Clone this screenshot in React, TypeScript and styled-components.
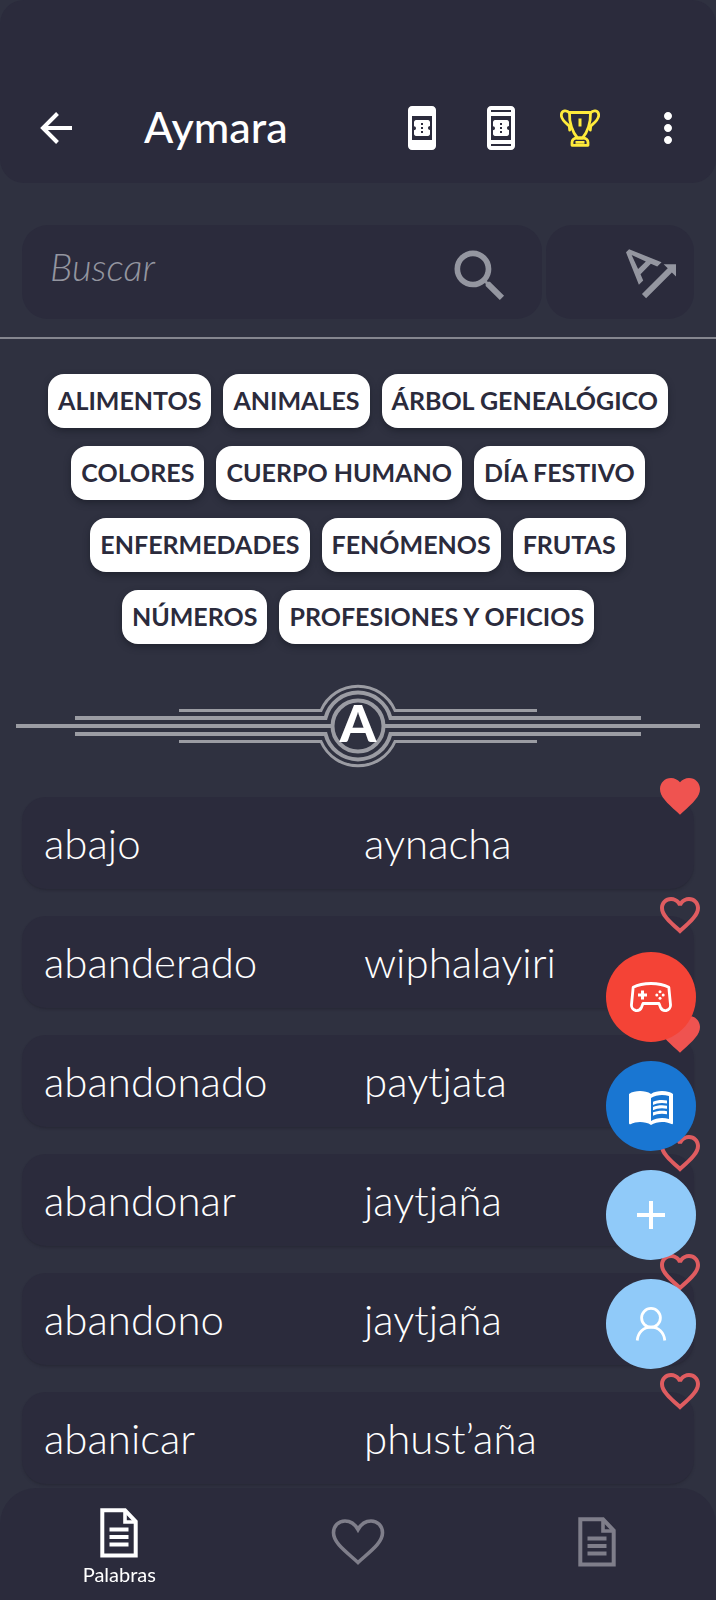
import React from "react";
import styled, { createGlobalStyle } from "styled-components";
import {
  MdBookOnline,
  MdFavorite,
  MdFavoriteBorder,
  MdMenuBook,
  MdMoreVert,
  MdOutlineBookOnline,
  MdSearch,
  MdTextRotationAngleup,
} from "react-icons/md";

const color = {
  page: "#2f3140",
  panel: "#2b2b3c",
  muted: "#9496a0",
  rule: "#85868f",
  ornament: "#9b9ca3",
  heart: "#ef5350",
  heartLine: "#df5c60",
  inactive: "#7f7e8a",
  red: "#f44336",
  blue: "#1976d2",
  sky: "#90caf9",
  text: "#ffffff",
};

const GlobalStyle = createGlobalStyle`
  *, *::before, *::after { box-sizing: border-box; }
  body {
    margin: 0;
    background: ${color.page};
    color: ${color.text};
    font-family: Lato, "Open Sans", sans-serif;
  }
  button {
    margin: 0;
    padding: 0;
    border: 0;
    background: none;
    color: inherit;
    font: inherit;
    cursor: pointer;
  }
  svg { display: block; }
`;

const Page = styled.div`
  min-height: 100vh;
  padding-bottom: 112px;
`;

const Header = styled.header`
  display: flex;
  align-items: center;
  gap: 40px;
  height: 183px;
  padding: 72px 24px 0 32px;
  background: ${color.panel};
  border-radius: 24px;
`;

const Actions = styled.div`
  display: flex;
  gap: 31px;
`;

const IconButton = styled.button`
  display: flex;
  align-items: center;
  justify-content: center;
  flex: none;
  width: 48px;
  height: 48px;
`;

const Title = styled.h1`
  flex: 1;
  margin: 0;
  padding: 0 0 2px 24px;
  font-size: 43px;
  line-height: 56px;
  font-weight: 500;
`;

const SearchBar = styled.form`
  display: flex;
  gap: 4px;
  margin: 42px 22px 0;
`;

const SearchField = styled.div`
  display: flex;
  flex: 1;
  align-items: center;
  min-width: 0;
  height: 94px;
  padding: 0 28px;
  background: ${color.panel};
  border-radius: 26px;
`;

const SearchInput = styled.input`
  flex: 1;
  min-width: 0;
  height: 60px;
  padding: 0 0 12px;
  border: 0;
  outline: 0;
  background: none;
  color: ${color.text};
  font: italic 300 38px/48px Lato, "Open Sans", sans-serif;
  &::placeholder {
    color: ${color.muted};
    opacity: 1;
  }
`;

const SearchSubmit = styled.button`
  && { padding-top: 8px; }
  color: ${color.muted};
`;

const SortButton = styled.button`
  display: flex;
  flex: none;
  align-items: center;
  justify-content: flex-end;
  width: 148px;
  && { padding-right: 8px; background: ${color.panel}; }
  border-radius: 26px;
  color: ${color.muted};
`;

const Rule = styled.hr`
  height: 2px;
  margin: 18px 0 0;
  border: 0;
  background: ${color.rule};
`;

const Chips = styled.div`
  display: flex;
  flex-direction: column;
  gap: 18px;
  padding: 35px 16px 0;
`;

const ChipRow = styled.div`
  display: flex;
  justify-content: center;
  gap: 12px;
`;

const Chip = styled.button`
  && {
    height: 54px;
    padding: 0 10px 2px;
    border-radius: 16px;
    background: #fff;
    box-shadow: 0 3px 6px rgba(24, 26, 36, 0.6);
    color: #2b2b3c;
    font-size: 25px;
    line-height: 52px;
    font-weight: 700;
    white-space: nowrap;
  }
`;

const LetterDivider = styled.h2`
  display: grid;
  grid-template-columns: 1fr 92px 1fr;
  align-items: center;
  height: 84px;
  margin: 40px 16px 0;
`;

const Seal = styled.span`
  display: grid;
  place-items: center;
  & > * { grid-area: 1 / 1; }
`;

const SealLetter = styled.span`
  padding-bottom: 8px;
  font-size: 52px;
  line-height: 76px;
  font-weight: 900;
`;

const Wing = styled.span<{ $side: "left" | "right" }>`
  display: flex;
  flex-direction: column;
  align-items: ${(p) => (p.$side === "left" ? "flex-end" : "flex-start")};
  gap: 4px;
`;

const Stripe = styled.span<{ $width: number; $thick: number }>`
  width: ${(p) => p.$width}%;
  height: ${(p) => p.$thick}px;
  background: ${color.ornament};
`;

const WordList = styled.ul`
  display: flex;
  flex-direction: column;
  gap: 27px;
  margin: 29px 22px 0;
  padding: 0;
  list-style: none;
`;

const WordRow = styled.li`
  position: relative;
  display: grid;
  grid-template-columns: 319fr 307fr;
  align-items: center;
  height: 92px;
  padding: 0 22px;
  border-radius: 24px;
  background: ${color.panel};
  box-shadow: 0 2px 3px -1px rgba(32, 32, 44, 0.6);
  font-size: 42px;
  line-height: 56px;
  font-weight: 300;
`;

const HeartButton = styled.button<{ $filled: boolean }>`
  position: absolute;
  top: -25px;
  right: -10px;
  color: ${(p) => (p.$filled ? color.heart : color.heartLine)};
`;

const Fabs = styled.div`
  position: fixed;
  right: 20px;
  bottom: 231px;
  display: flex;
  flex-direction: column;
  gap: 19px;
`;

const Fab = styled.button<{ $bg: string }>`
  && {
    display: flex;
    align-items: center;
    justify-content: center;
    width: 90px;
    height: 90px;
    border-radius: 50%;
    background: ${(p) => p.$bg};
  }
`;

const BottomNav = styled.nav`
  position: fixed;
  inset: auto 0 0;
  display: grid;
  grid-template-columns: repeat(3, 1fr);
  height: 112px;
  background: ${color.panel};
  border-radius: 36px 36px 0 0;
`;

const NavLink = styled.a<{ $active?: boolean }>`
  display: flex;
  flex-direction: column;
  align-items: center;
  justify-content: center;
  gap: 2px;
  padding: ${(p) => (p.$active ? "8px 0 0" : "0 0 4px")};
  color: ${(p) => (p.$active ? color.text : color.inactive)};
  font-size: 20px;
  line-height: 28px;
  text-decoration: none;
`;

const BackIcon = () => (
  <svg width="34" height="34" viewBox="0 0 34 34" fill="none" stroke="currentColor" strokeWidth="4">
    <path d="M33 17H4M18.500 2.500L4 17l14.500 14.500" />
  </svg>
);

const TrophyIcon = () => (
  <svg width="40" height="38" viewBox="0 0 40 38" fill="none" stroke="#ffeb3b" strokeWidth="2.800" strokeLinejoin="round">
    <path d="M9.500 3.500h21c.4 10-3 20-8 25.500h-5C12.500 23.500 9 13.500 9.500 3.500z" />
    <path d="M9.500 4C7 .8 1.500 1 1.300 6c-.1 5 5.500 8.500 8 11l.4 4M30.500 4c2.500-3.200 8-3 8.200 2 .1 5-5.500 8.500-8 11l-.4 4" strokeLinecap="round" />
    <path d="M20 9.500v8" strokeWidth="3" />
    <path d="M12 36.300v-3c0-2.400 2-4.300 5-4.300h6c3 0 5 1.900 5 4.300v3zM15.500 33.300h9" />
  </svg>
);

const GamepadIcon = () => (
  <svg width="42" height="30" viewBox="0 0 42 30" fill="none" stroke="#fff" strokeWidth="2.800" strokeLinejoin="round">
    <path d="M3.200 5.200C8 2.700 14.500 1.500 21 1.500s13 1.200 17.800 3.700l1.700 17.300c.3 3-1.600 5.500-4.300 6-2.500.4-4.800-1-5.800-3.400L29 21.500H13l-1.400 3.600c-1 2.400-3.300 3.800-5.800 3.400-2.700-.5-4.600-3-4.300-6z" />
    <path d="M12.500 8.500v9M8 13h9" strokeWidth="3" />
    <g fill="#fff" stroke="none">
      <circle cx="30" cy="9.800" r="1.500" />
      <circle cx="30" cy="16.200" r="1.500" />
      <circle cx="26.800" cy="13" r="1.500" />
      <circle cx="33.200" cy="13" r="1.500" />
    </g>
  </svg>
);

const PlusIcon = () => (
  <svg width="28" height="28" viewBox="0 0 28 28" stroke="#fff" strokeWidth="4">
    <path d="M14 0v28M0 14h28" />
  </svg>
);

const PersonIcon = () => (
  <svg width="32" height="34" viewBox="0 0 32 34" fill="none" stroke="#fff" strokeWidth="2.800">
    <circle cx="16" cy="10.800" r="9.400" />
    <path d="M2.200 33.500C3 25.500 8.500 20.200 16 20.200s13 5.300 13.800 13.300" />
  </svg>
);

const DocumentIcon = () => (
  <svg width="38" height="50" viewBox="0 0 38 50" fill="none" stroke="currentColor">
    <path d="M2.300 2.300H25L35.700 13.500V47.500H2.300z" strokeWidth="4" />
    <path d="M25 3v11h10.500" strokeWidth="3.600" />
    <path d="M9.500 21.500h19M9.500 29h19M9.500 36.500h19" strokeWidth="3.800" />
  </svg>
);

const NavHeartIcon = () => (
  <svg width="54" height="46" viewBox="0 0 54 46" fill="none" stroke="currentColor" strokeWidth="3.600">
    <path d="M27 43.500C15 32.500 2.500 24 2.500 13.800 2.500 7 7.500 2 14 2c5.200 0 10 3.200 13 8.500C30 5.200 34.800 2 40 2c6.500 0 11.500 5 11.500 11.800C51.500 24 39 32.500 27 43.500z" />
  </svg>
);

const SealRings = () => (
  <svg width="92" height="84" viewBox="0 0 92 84" fill="none" stroke={color.ornament}>
    <circle cx="46" cy="42" r="25.500" strokeWidth="4" />
    <path d="M0 34H13.500A33.500 33.500 0 0 1 78.500 34H92M0 50H13.500A33.500 33.500 0 0 0 78.500 50H92" strokeWidth="4" />
    <path d="M0 26.500H9A40.300 40.300 0 0 1 83 26.500H92M0 57.500H9A40.300 40.300 0 0 0 83 57.500H92" strokeWidth="3" />
    <path d="M0 42H19M73 42H92" strokeWidth="4" />
  </svg>
);

const categories = [
  ["ALIMENTOS", "ANIMALES", "ÁRBOL GENEALÓGICO"],
  ["COLORES", "CUERPO HUMANO", "DÍA FESTIVO"],
  ["ENFERMEDADES", "FENÓMENOS", "FRUTAS"],
  ["NÚMEROS", "PROFESIONES Y OFICIOS"],
];

const words = [
  { es: "abajo", ay: "aynacha", favorite: true },
  { es: "abanderado", ay: "wiphalayiri", favorite: false },
  { es: "abandonado", ay: "paytjata", favorite: true },
  { es: "abandonar", ay: "jaytjaña", favorite: false },
  { es: "abandono", ay: "jaytjaña", favorite: false },
  { es: "abanicar", ay: "phust’aña", favorite: false },
];

const stripes = [
  { width: 45, thick: 3 },
  { width: 80, thick: 4 },
  { width: 100, thick: 4 },
  { width: 80, thick: 4 },
  { width: 45, thick: 3 },
];

const Stripes = ({ side }: { side: "left" | "right" }) => (
  <Wing $side={side}>
    {stripes.map((s, i) => (
      <Stripe key={i} $width={s.width} $thick={s.thick} />
    ))}
  </Wing>
);

export default function App() {
  return (
    <Page>
      <GlobalStyle />
      <Header>
        <IconButton aria-label="Volver">
          <BackIcon />
        </IconButton>
        <Title>Aymara</Title>
        <Actions>
          <IconButton aria-label="Tarjetas">
            <MdBookOnline size={48} />
          </IconButton>
          <IconButton aria-label="Fichas">
            <MdOutlineBookOnline size={48} />
          </IconButton>
          <IconButton aria-label="Logros">
            <TrophyIcon />
          </IconButton>
        </Actions>
        <IconButton aria-label="Más opciones">
          <MdMoreVert size={48} />
        </IconButton>
      </Header>

      <SearchBar role="search" onSubmit={(e) => e.preventDefault()}>
        <SearchField>
          <SearchInput type="text" placeholder="Buscar" aria-label="Buscar" />
          <SearchSubmit type="submit" aria-label="Buscar palabra">
            <MdSearch size={68} />
          </SearchSubmit>
        </SearchField>
        <SortButton type="button" aria-label="Cambiar orden">
          <MdTextRotationAngleup size={70} />
        </SortButton>
      </SearchBar>
      <Rule />

      <Chips>
        {categories.map((row) => (
          <ChipRow key={row[0]}>
            {row.map((name) => (
              <Chip key={name}>{name}</Chip>
            ))}
          </ChipRow>
        ))}
      </Chips>

      <LetterDivider>
        <Stripes side="left" />
        <Seal>
          <SealRings />
          <SealLetter>A</SealLetter>
        </Seal>
        <Stripes side="right" />
      </LetterDivider>

      <WordList>
        {words.map((w) => (
          <WordRow key={w.es}>
            <span>{w.es}</span>
            <span>{w.ay}</span>
            <HeartButton $filled={w.favorite} aria-label={`Favorito: ${w.es}`}>
              {w.favorite ? <MdFavorite size={48} /> : <MdFavoriteBorder size={48} />}
            </HeartButton>
          </WordRow>
        ))}
      </WordList>

      <Fabs>
        <Fab $bg={color.red} aria-label="Juegos">
          <GamepadIcon />
        </Fab>
        <Fab $bg={color.blue} aria-label="Diccionario">
          <MdMenuBook size={48} />
        </Fab>
        <Fab $bg={color.sky} aria-label="Agregar">
          <PlusIcon />
        </Fab>
        <Fab $bg={color.sky} aria-label="Perfil">
          <PersonIcon />
        </Fab>
      </Fabs>

      <BottomNav>
        <NavLink href="#palabras" $active>
          <DocumentIcon />
          <span>Palabras</span>
        </NavLink>
        <NavLink href="#favoritos" aria-label="Favoritos">
          <NavHeartIcon />
        </NavLink>
        <NavLink href="#frases" aria-label="Frases">
          <DocumentIcon />
        </NavLink>
      </BottomNav>
    </Page>
  );
}
